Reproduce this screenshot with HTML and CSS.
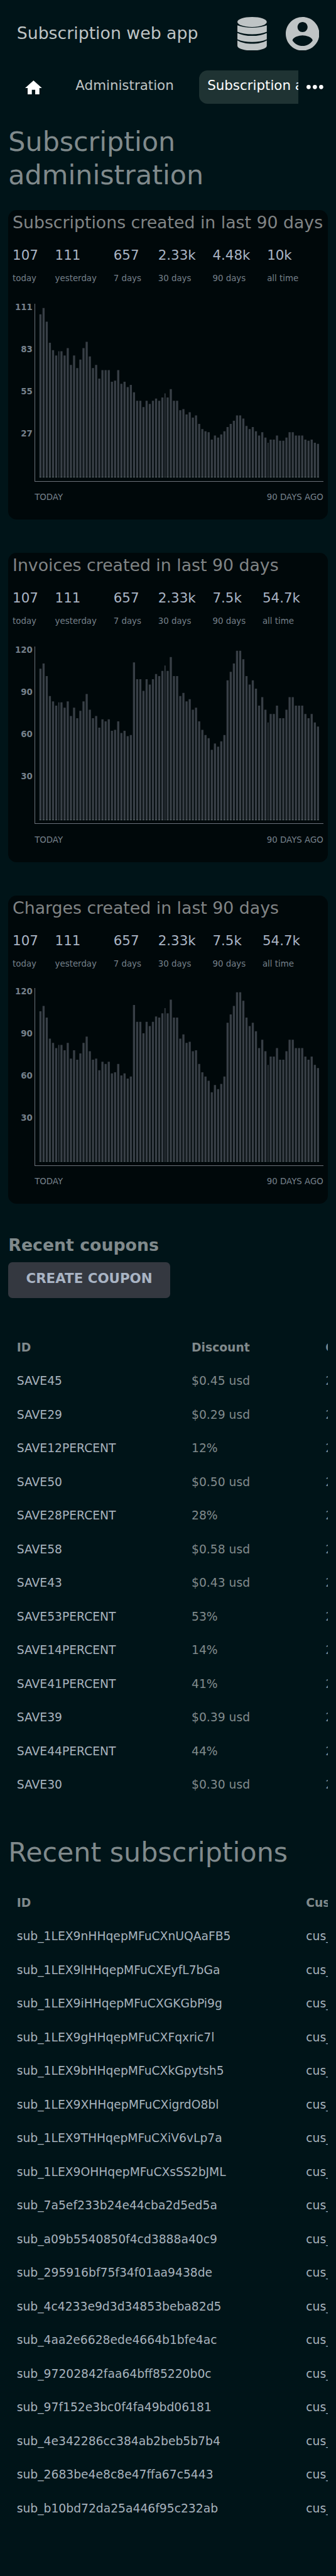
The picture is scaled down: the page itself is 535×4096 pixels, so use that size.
FILE: index.html
```
<!DOCTYPE html>
<html lang="en">
<head>
<meta charset="utf-8">
<title>Subscription administration</title>
<link rel="stylesheet" href="styles.css">
</head>
<body>
<header class="header">
  <div class="header-title">Subscription web app</div>
  <svg class="icon-data" viewBox="0 0 448 512"><path d="M224 0C348 0 448 34 448 76S348 152 224 152 0 118 0 76 100 0 224 0zM0 128C60 151 140 163 224 163S388 151 448 128V226C388 252 308 264 224 264S60 252 0 226zM0 243C60 274 140 288 224 288S388 274 448 243V341C388 369 308 381 224 381S60 369 0 341zM0 357C60 393 140 408 224 408S388 393 448 357V438C448 479 348 512 224 512S0 479 0 438z"/></svg>
  <svg class="icon-account" viewBox="2 2 20 20"><path d="M12 2C6.480 2 2 6.480 2 12s4.480 10 10 10 10-4.480 10-10S17.520 2 12 2zm0 3c1.660 0 3 1.340 3 3s-1.340 3-3 3-3-1.340-3-3 1.340-3 3-3zm0 14.200c-2.500 0-4.710-1.280-6-3.220.030-1.990 4-3.080 6-3.080 1.990 0 5.970 1.090 6 3.080-1.290 1.940-3.500 3.220-6 3.220z"/></svg>
</header>
<nav class="nav">
  <div class="tabs">
    <a class="tab-home"><svg class="icon-home" viewBox="2 3 20 17"><path d="M10 20v-6h4v6h5v-8h3L12 3 2 12h3v8z"/></svg></a>
    <a class="tab">Administration</a>
    <a class="tab tab-current">Subscription administration</a>
  </div>
  <svg class="icon-more" viewBox="0 0 32 8"><circle cx="4" cy="4" r="4"/><circle cx="16" cy="4" r="4"/><circle cx="28" cy="4" r="4"/></svg>
</nav>
<main class="content">
  <h1 class="page-title">Subscription administration</h1>

  <section class="card">
    <h2 class="card-title">Subscriptions created in last 90 days</h2>
    <ul class="stats">
      <li><b>107</b><span>today</span></li>
      <li><b>111</b><span>yesterday</span></li>
      <li><b>657</b><span>7 days</span></li>
      <li><b>2.33k</b><span>30 days</span></li>
      <li><b>4.48k</b><span>90 days</span></li>
      <li><b>10k</b><span>all time</span></li>
    </ul>
    <div class="chart">
      <div class="scale"><span>111</span><span>83</span><span>55</span><span>27</span></div>
      <svg class="plot" viewBox="0 0 548 336" data-chart="subscriptions"></svg>
    </div>
    <div class="range"><span>TODAY</span><span>90 DAYS AGO</span></div>
  </section>

  <section class="card">
    <h2 class="card-title">Invoices created in last 90 days</h2>
    <ul class="stats">
      <li><b>107</b><span>today</span></li>
      <li><b>111</b><span>yesterday</span></li>
      <li><b>657</b><span>7 days</span></li>
      <li><b>2.33k</b><span>30 days</span></li>
      <li><b>7.5k</b><span>90 days</span></li>
      <li><b>54.7k</b><span>all time</span></li>
    </ul>
    <div class="chart">
      <div class="scale"><span>120</span><span>90</span><span>60</span><span>30</span></div>
      <svg class="plot" viewBox="0 0 548 336" data-chart="invoices"></svg>
    </div>
    <div class="range"><span>TODAY</span><span>90 DAYS AGO</span></div>
  </section>

  <section class="card card-last">
    <h2 class="card-title">Charges created in last 90 days</h2>
    <ul class="stats">
      <li><b>107</b><span>today</span></li>
      <li><b>111</b><span>yesterday</span></li>
      <li><b>657</b><span>7 days</span></li>
      <li><b>2.33k</b><span>30 days</span></li>
      <li><b>7.5k</b><span>90 days</span></li>
      <li><b>54.7k</b><span>all time</span></li>
    </ul>
    <div class="chart">
      <div class="scale"><span>120</span><span>90</span><span>60</span><span>30</span></div>
      <svg class="plot" viewBox="0 0 548 336" data-chart="charges"></svg>
    </div>
    <div class="range"><span>TODAY</span><span>90 DAYS AGO</span></div>
  </section>

  <h2 class="section-title">Recent coupons</h2>
  <a class="button">CREATE COUPON</a>
  <div class="table-wrap coupons">
    <table class="table">
      <colgroup><col class="col-coupon"><col class="col-discount"><col class="col-created"></colgroup>
      <tr><th>ID</th><th>Discount</th><th>Created</th></tr>
      <tr><td><a>SAVE45</a></td><td>$0.45 usd</td><td>2021</td></tr>
      <tr><td><a>SAVE29</a></td><td>$0.29 usd</td><td>2021</td></tr>
      <tr><td><a>SAVE12PERCENT</a></td><td>12%</td><td>2021</td></tr>
      <tr><td><a>SAVE50</a></td><td>$0.50 usd</td><td>2021</td></tr>
      <tr><td><a>SAVE28PERCENT</a></td><td>28%</td><td>2021</td></tr>
      <tr><td><a>SAVE58</a></td><td>$0.58 usd</td><td>2021</td></tr>
      <tr><td><a>SAVE43</a></td><td>$0.43 usd</td><td>2021</td></tr>
      <tr><td><a>SAVE53PERCENT</a></td><td>53%</td><td>2021</td></tr>
      <tr><td><a>SAVE14PERCENT</a></td><td>14%</td><td>2021</td></tr>
      <tr><td><a>SAVE41PERCENT</a></td><td>41%</td><td>2021</td></tr>
      <tr><td><a>SAVE39</a></td><td>$0.39 usd</td><td>2021</td></tr>
      <tr><td><a>SAVE44PERCENT</a></td><td>44%</td><td>2021</td></tr>
      <tr><td><a>SAVE30</a></td><td>$0.30 usd</td><td>2021</td></tr>
    </table>
  </div>

  <h1 class="page-title recent-title">Recent subscriptions</h1>
  <div class="table-wrap">
    <table class="table">
      <colgroup><col class="col-subscription"><col class="col-customer"></colgroup>
      <tr><th>ID</th><th>Customer</th></tr>
      <tr><td><a>sub_1LEX9nHHqepMFuCXnUQAaFB5</a></td><td><a>cus_</a></td></tr>
      <tr><td><a>sub_1LEX9lHHqepMFuCXEyfL7bGa</a></td><td><a>cus_</a></td></tr>
      <tr><td><a>sub_1LEX9iHHqepMFuCXGKGbPi9g</a></td><td><a>cus_</a></td></tr>
      <tr><td><a>sub_1LEX9gHHqepMFuCXFqxric7l</a></td><td><a>cus_</a></td></tr>
      <tr><td><a>sub_1LEX9bHHqepMFuCXkGpytsh5</a></td><td><a>cus_</a></td></tr>
      <tr><td><a>sub_1LEX9XHHqepMFuCXigrdO8bl</a></td><td><a>cus_</a></td></tr>
      <tr><td><a>sub_1LEX9THHqepMFuCXiV6vLp7a</a></td><td><a>cus_</a></td></tr>
      <tr><td><a>sub_1LEX9OHHqepMFuCXsSS2bJML</a></td><td><a>cus_</a></td></tr>
      <tr><td><a>sub_7a5ef233b24e44cba2d5ed5a</a></td><td><a>cus_</a></td></tr>
      <tr><td><a>sub_a09b5540850f4cd3888a40c9</a></td><td><a>cus_</a></td></tr>
      <tr><td><a>sub_295916bf75f34f01aa9438de</a></td><td><a>cus_</a></td></tr>
      <tr><td><a>sub_4c4233e9d3d34853beba82d5</a></td><td><a>cus_</a></td></tr>
      <tr><td><a>sub_4aa2e6628ede4664b1bfe4ac</a></td><td><a>cus_</a></td></tr>
      <tr><td><a>sub_97202842faa64bff85220b0c</a></td><td><a>cus_</a></td></tr>
      <tr><td><a>sub_97f152e3bc0f4fa49bd06181</a></td><td><a>cus_</a></td></tr>
      <tr><td><a>sub_4e342286cc384ab2beb5b7b4</a></td><td><a>cus_</a></td></tr>
      <tr><td><a>sub_2683be4e8c8e47ffa67c5443</a></td><td><a>cus_</a></td></tr>
      <tr><td><a>sub_b10bd72da25a446f95c232ab</a></td><td><a>cus_</a></td></tr>
    </table>
  </div>
</main>
<script src="charts.js"></script>
</body>
</html>
```

FILE: styles.css
```
/* 1rem is ten design pixels of the 640px wide layout */
html { font-size: 8.358px; background: #001418; }
* { box-sizing: border-box; }
body {
  margin: 0;
  width: 64rem;
  height: 4096px;
  overflow: hidden;
  color: #808a8c;
  font-family: "DejaVu Sans", sans-serif;
  font-size: 2.24rem;
}
svg { display: block; }

.header { display: flex; align-items: center; height: 12.8rem; padding: 0 3.2rem; }
.header-title { flex: 1; padding-bottom: .2rem; font-size: 3.2rem; color: #bfc4c5; }
.icon-data { width: 5.6rem; height: 6.4rem; fill: #bfc4c5; }
.icon-account { width: 6.4rem; height: 6.4rem; margin-left: 3.6rem; fill: #bfc4c5; }

.nav { display: flex; align-items: center; margin-top: .6rem; padding: 0 2.4rem 0 3.2rem; }
.tabs { display: flex; gap: 3.2rem; width: 53.6rem; height: 6.4rem; overflow: hidden; }
.tab-home { flex: none; display: flex; align-items: center; justify-content: center; width: 6.4rem; height: 6.5rem; }
.icon-home { width: 3.2rem; height: 2.72rem; fill: #fff; }
.tab {
  flex: none;
  padding: 0 1.6rem;
  border-radius: 1.6rem;
  font-size: 2.56rem;
  line-height: 5.8rem;
  white-space: nowrap;
  color: #bfc4c5;
}
.tab-current { background: #1f3333; color: #fff; }
.icon-more { width: 3.2rem; height: .8rem; margin-left: 1.6rem; fill: #fff; }

.content { padding: 0 1.6rem; }
.page-title { margin: 4rem 0 3.4rem; font-size: 5.12rem; font-weight: 400; line-height: 6.4rem; }

.card {
  height: 58.8rem;
  margin-bottom: 6.4rem;
  padding: 0 .8rem;
  border-radius: 1.6rem;
  background: #00080a;
}
.card-last { height: 58.6rem; margin-bottom: 5.6rem; }
.card-title { margin: 0; font-size: 3.2rem; font-weight: 400; line-height: 4.8rem; white-space: nowrap; color: #808485; }
.stats { display: flex; gap: 3.2rem; margin: 1.8rem 0 3.1rem; padding: 0; list-style: none; }
.card-last .stats { margin-bottom: 2.9rem; }
.stats li { display: grid; row-gap: .9rem; }
.stats b { font-size: 2.56rem; font-weight: 400; line-height: 4rem; color: #a9b4c4; }
.stats span { font-size: 1.6rem; line-height: 3.2rem; color: #75808a; }

.chart { display: grid; grid-template-columns: 3.8rem 55rem; column-gap: .4rem; }
.scale { display: grid; grid-auto-rows: 8rem; align-content: start; font-size: 1.6rem; font-weight: 700; line-height: 1.4rem; text-align: right; color: #75808a; }
.plot { width: 55rem; height: 33.8rem; border-left: .2rem solid #6b727b; border-bottom: .2rem solid #6b727b; }
.bars { fill: #383f46; }
.bar-feet { fill: #566066; }
.range { display: flex; justify-content: space-between; margin: 1.5rem 0 0 4.2rem; font-size: 1.6rem; line-height: 3.2rem; color: #75808a; }

.section-title { margin: 0 0 1rem; font-size: 3.2rem; font-weight: 700; line-height: 4.6rem; }
.button {
  display: block;
  width: 30.8rem;
  height: 6.8rem;
  border-radius: .8rem;
  background: #343840;
  color: #a9b4c4;
  font-size: 2.56rem;
  font-weight: 700;
  line-height: 6.3rem;
  text-align: center;
}

.table-wrap { overflow: hidden; }
.coupons { margin-top: 6.25rem; }
.recent-title { margin: 6.45rem 0 3.2rem; }
.table { width: 90rem; table-layout: fixed; border-collapse: collapse; }
.table th, .table td { height: 6.4rem; padding: 0 0 0 1.6rem; line-height: 3.2rem; text-align: left; white-space: nowrap; }
.table a { color: #a7b2bd; }
.col-coupon { width: 33.3rem; }
.col-discount { width: 25.5rem; }
.col-subscription { width: 55.1rem; }
```

FILE: charts.js
```
// Daily bar heights, from today back to 90 days ago
const charts = {
  subscriptions: [
    310,322,296,256,242,232,240,240,232,246, 214,232,208,224,246,258,230,208,214,188,
    204,204,204,182,184,204,178,182,172,176, 162,146,146,134,146,140,146,150,146,152,
    160,152,168,146,146,128,130,120,124,114, 118,102,92,88,86,72,80,76,82,88,
    96,102,108,118,118,112,98,92,96,88, 80,86,76,66,72,72,80,70,70,76,
    86,86,80,80,80,72,70,72,66,64],
  invoices: [
    288,298,274,236,226,218,224,224,214,226, 198,214,194,208,226,240,210,194,198,176,
    192,188,192,170,172,188,166,170,160,162, 300,268,268,246,268,258,268,278,274,284,
    294,284,310,274,274,236,242,226,230,210, 214,188,172,162,156,134,146,140,150,162,
    266,282,298,322,322,306,274,258,266,250, 218,234,210,186,202,202,218,194,194,210,
    234,234,218,218,218,202,194,202,186,178],
  charges: [
    286,296,274,234,226,216,222,222,212,226, 196,212,194,206,226,238,210,194,196,174,
    190,186,190,168,170,186,164,168,158,162, 298,266,266,244,266,258,266,276,274,282,
    292,282,308,274,274,234,242,226,228,210, 212,186,170,162,154,132,146,138,148,162,
    264,280,296,322,322,306,274,258,264,248, 216,232,210,184,200,200,216,194,194,210,
    232,232,216,216,216,200,194,200,184,178]
};
const base = 330;
const narrow = [6, 40, 73];

for (const plot of document.querySelectorAll('.plot')) {
  let x = 8, bars = '', feet = '';
  charts[plot.dataset.chart].forEach((height, day) => {
    const width = narrow.includes(day) ? 2 : 4;
    bars += `M${x} ${base - 2}v${2 - height}h${width}v${height - 2}z`;
    feet += `M${x} ${base}v-2h${width}v2z`;
    x += width + 2;
  });
  plot.innerHTML = `<path class="bars" d="${bars}"/><path class="bar-feet" d="${feet}"/>`;
}
```
